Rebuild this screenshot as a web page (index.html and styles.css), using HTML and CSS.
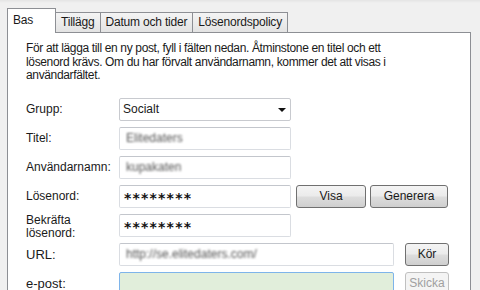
FILE: index.html
```html
<!DOCTYPE html>
<html lang="sv">
<head>
    <meta charset="UTF-8">
    <title>Ny post</title>
    <link rel="stylesheet" href="styles.css">
</head>
<body>

    <div class="tabs">
        <div class="tab active">Bas</div>
        <div class="tab">Tillägg</div>
        <div class="tab">Datum och tider</div>
        <div class="tab">Lösenordspolicy</div>
    </div>

    <div class="panel">
        <p class="intro">För att lägga till en ny post, fyll i fälten nedan. Åtminstone en titel och ett lösenord krävs. Om du har förvalt användarnamn, kommer det att visas i användarfältet.</p>

        <div class="row">
            <label class="label">Grupp:</label>
            <div class="field select">Socialt<span class="arrow"></span></div>
        </div>
        <div class="row">
            <label class="label">Titel:</label>
            <div class="field"><span class="blur">Elitedaters</span></div>
        </div>
        <div class="row">
            <label class="label">Användarnamn:</label>
            <div class="field"><span class="blur">kupakaten</span></div>
        </div>
        <div class="row">
            <label class="label">Lösenord:</label>
            <div class="field stars">********</div>
            <button class="btn btn-visa">Visa</button>
            <button class="btn btn-gen">Generera</button>
        </div>
        <div class="row">
            <label class="label two">Bekräfta<br>lösenord:</label>
            <div class="field stars">********</div>
        </div>
        <div class="row row-url">
            <label class="label big">URL:</label>
            <div class="field wide"><span class="blur">http://se.elitedaters.com/</span></div>
            <button class="btn btn-small">Kör</button>
        </div>
        <div class="row row-mail">
            <label class="label big">e-post:</label>
            <div class="field wide focus"></div>
            <button class="btn btn-small" disabled>Skicka</button>
        </div>
    </div>

</body>
</html>
```

FILE: styles.css
```css
body {
    margin: 0;
    height: 290px;
    overflow: hidden;
    background: #f0f0f0;
    font-family: "Liberation Sans", Arial, sans-serif;
    font-size: 12px;
    color: #1a1a1a;
}

.tabs {
    display: flex;
    align-items: flex-end;
    padding: 7px 0 0 7px;
    height: 25px;
    background: linear-gradient(#e4e4e4 0, #f0f0f0 3px);
    letter-spacing: -0.2px;
}

.tab {
    height: 19px;
    line-height: 19px;
    padding: 0 5px;
    border: 1px solid #8d8f94;
    border-bottom: none;
    border-left: none;
    background: linear-gradient(#f4f4f4, #e3e3e3);
}

.tab.active {
    height: 24px;
    line-height: 22px;
    width: 37px;
    border-left: 1px solid #8d8f94;
    background: #fff;
    position: relative;
    top: 1px;
    z-index: 1;
}

.panel {
    margin: 0 9px 0 7px;
    height: 258px;
    border: 1px solid #8d8f94;
    border-bottom: none;
    background: #fff;
    padding: 9px 0 0 18px;
    box-sizing: border-box;
}

.intro {
    margin: 0 0 15px;
    width: 400px;
    line-height: 13.5px;
    letter-spacing: -0.35px;
}

.row {
    display: flex;
    align-items: center;
    height: 23px;
    margin-bottom: 6px;
}

.row-url,
.row-mail {
    margin-top: 2px;
}

.label {
    width: 93px;
    flex: none;
}

.label.two {
    line-height: 13px;
    padding-top: 4px;
}

.label.big {
    font-size: 13px;
}

.field {
    width: 172px;
    height: 23px;
    box-sizing: border-box;
    border: 1px solid #dadde2;
    border-top-color: #c3c6cc;
    border-radius: 2px;
    background: #fff;
    padding: 0 6px;
    line-height: 21px;
    flex: none;
}

.field.wide {
    width: 275px;
}

.field.focus {
    background: #e1eedb;
    border-color: #7eb4ea;
}

.select {
    position: relative;
    border-color: #c8cacf;
    padding-left: 3px;
}

.arrow {
    position: absolute;
    right: 4px;
    top: 9px;
    border-left: 4px solid transparent;
    border-right: 4px solid transparent;
    border-top: 4px solid #111;
}

.blur {
    display: inline-block;
    color: #555;
    filter: blur(1.3px);
}

.stars {
    font-family: "DejaVu Sans", sans-serif;
    font-size: 14px;
    font-weight: bold;
    letter-spacing: 1.2px;
    padding-left: 4px;
    line-height: 25px;
    color: #111;
}

.btn {
    height: 23px;
    box-sizing: border-box;
    border: 1px solid #707070;
    border-radius: 3px;
    background: linear-gradient(#f4f4f4 0%, #ebebeb 48%, #dddddd 52%, #cfcfcf 100%);
    font-family: inherit;
    font-size: 12px;
    color: #1a1a1a;
    padding: 0;
    flex: none;
}

.btn-visa {
    width: 70px;
    margin-left: 5px;
}

.btn-gen {
    width: 78px;
    margin-left: 4px;
}

.btn-small {
    width: 44px;
    margin-left: 11px;
}

.btn:disabled {
    border-color: #c0c0c0;
    background: #f4f4f4;
    color: #a0a0a0;
}
```
